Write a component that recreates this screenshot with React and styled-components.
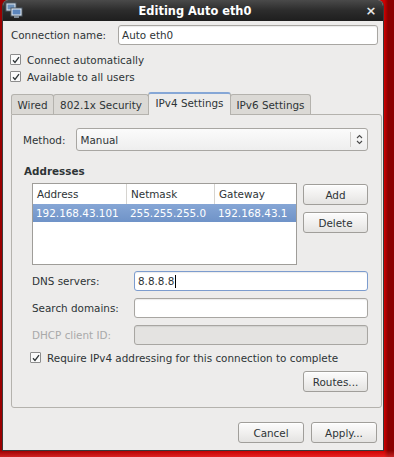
import styled, { createGlobalStyle } from "styled-components";

const GlobalStyle = createGlobalStyle`
  html, body {
    margin: 0;
    padding: 0;
  }
  body {
    width: 394px;
    height: 457px;
    overflow: hidden;
    font-family: "DejaVu Sans", "Liberation Sans", sans-serif;
    font-size: 10.4px;
    color: #2e3436;
    background: #a00000;
  }
`

const Desktop = styled.div`
  width: 394px;
  height: 457px;
  display: flex;
  align-items: flex-start;
  background:
    linear-gradient(180deg, transparent 0%, transparent 98.6%, rgba(255, 70, 70, 0.5) 100%),
    linear-gradient(90deg, #9a0000 0%, #c80000 60%, #d00000 97.5%, #8a0000 98.5%, #8a0000 100%);
`

const Window = styled.div`
  margin-left: 2px;
  width: 382px;
  height: 451px;
  background: #edeceb;
  border: 1px solid #3a3a3a;
  border-top: none;
  border-radius: 6px 6px 0 0;
  box-sizing: border-box;
  display: flex;
  flex-direction: column;
  overflow: hidden;
`

const TitleBar = styled.div`
  height: 21px;
  flex: none;
  display: flex;
  align-items: center;
  padding: 0 6px 0 2px;
  background: linear-gradient(180deg, #4a4a4a 0%, #2c2c2c 50%, #1e1e1e 100%);
  color: #ffffff;
`

const TitleText = styled.div`
  flex: 1;
  text-align: center;
  font-weight: bold;
  font-size: 11.4px;
  padding-left: 2px;
`

const CloseMark = styled.div`
  width: 12px;
  text-align: center;
  font-size: 13px;
  font-weight: bold;
  color: #e6e6e6;
`

const Content = styled.div`
  flex: 1;
  display: flex;
  flex-direction: column;
  padding: 4px 5px 7px 5px;
`

const NameRow = styled.div`
  display: flex;
  align-items: center;
  gap: 12px;
  padding-left: 3px;
`

const Label = styled.span`
  white-space: nowrap;
  color: ${(p) => (p.$disabled ? "#a9a9a9" : "#2e3436")};
  flex: none;
`

const TextField = styled.div`
  flex: 1;
  height: 20px;
  box-sizing: border-box;
  border: 1px solid ${(p) => (p.$focus ? "#7c9cce" : "#a8a6a2")};
  border-radius: 3px;
  background: ${(p) => (p.$disabled ? "#e4e3e1" : "#ffffff")};
  box-shadow: inset 0 1px 1px rgba(0, 0, 0, 0.08);
  display: flex;
  align-items: center;
  padding-left: 3px;
  color: #2e3436;
`

const Caret = styled.span`
  display: inline-block;
  width: 1px;
  height: 13px;
  background: #000;
  margin-left: 1px;
`

const CheckRow = styled.label`
  display: flex;
  align-items: center;
  gap: 6px;
  height: 17px;
  white-space: nowrap;
  padding-left: ${(p) => p.$indent || "2px"};
  margin-top: ${(p) => p.$top || "0px"};
`

const CheckBox = styled.span`
  width: 9px;
  height: 9px;
  border: 1px solid #8c8c8c;
  border-radius: 1px;
  background: #fafafa;
  display: flex;
  align-items: center;
  justify-content: center;
  flex: none;
`

const TabStrip = styled.div`
  display: flex;
  align-items: flex-end;
  margin-top: 7px;
  padding-left: 3px;
  height: 22px;
`

const Tab = styled.div`
  width: ${(p) => p.$width};
  height: ${(p) => (p.$active ? "23px" : "20px")};
  box-sizing: border-box;
  display: flex;
  align-items: center;
  justify-content: center;
  border: 1px solid #b4b2ad;
  border-bottom: none;
  border-radius: 3px 3px 0 0;
  margin-right: -1px;
  background: ${(p) => (p.$active ? "#edeceb" : "#dbd9d5")};
  border-top: ${(p) => (p.$active ? "2px solid #86a7d6" : "1px solid #b4b2ad")};
  position: relative;
  z-index: ${(p) => (p.$active ? 1 : 0)};
  margin-bottom: ${(p) => (p.$active ? "-1px" : "0")};
  padding-bottom: ${(p) => (p.$active ? "3px" : "0")};
`

const Panel = styled.div`
  margin-left: 3px;
  width: 371px;
  height: 294px;
  box-sizing: border-box;
  border: 1px solid #b4b2ad;
  border-radius: 0 3px 3px 3px;
  padding: 13px 13px 0 11px;
  display: flex;
  flex-direction: column;
`

const MethodRow = styled.div`
  display: flex;
  align-items: center;
  gap: 11px;
`

const Combo = styled.div`
  flex: 1;
  height: 23px;
  box-sizing: border-box;
  border: 1px solid #a8a6a2;
  border-radius: 3px;
  background: linear-gradient(180deg, #fbfbfb 0%, #eeeeee 100%);
  display: flex;
  align-items: center;
  padding-left: 3px;
`

const ComboText = styled.span`
  flex: 1;
`

const ComboArrow = styled.span`
  width: 16px;
  height: 15px;
  border-left: 1px solid #d0cecb;
  display: flex;
  align-items: center;
  justify-content: center;
`

const SectionTitle = styled.div`
  font-weight: bold;
  margin-top: 14px;
  margin-left: 1px;
`

const AddressArea = styled.div`
  display: flex;
  gap: 6px;
  margin-top: 6px;
  padding-left: 9px;
`

const Table = styled.div`
  width: 265px;
  height: 82px;
  box-sizing: border-box;
  border: 1px solid #9f9d99;
  background: #ffffff;
  display: flex;
  flex-direction: column;
`

const TableRow = styled.div`
  display: grid;
  grid-template-columns: 94px 88px 1fr;
  height: ${(p) => (p.$header ? "20px" : "18px")};
  align-items: center;
  background: ${(p) => (p.$selected ? "linear-gradient(180deg, #86a6d5 0%, #6f93c8 100%)" : "#ffffff")};
  color: ${(p) => (p.$selected ? "#ffffff" : "#2e3436")};
`

const Cell = styled.div`
  height: 100%;
  display: flex;
  align-items: center;
  padding-left: ${(p) => (p.$header ? "4px" : "3px")};
  border-right: ${(p) => (p.$header && !p.$last ? "1px solid #d6d4d0" : "none")};
  white-space: nowrap;
  overflow: hidden;
`

const ButtonColumn = styled.div`
  display: flex;
  flex-direction: column;
  gap: 7px;
  padding-top: 1px;
`

const Button = styled.div`
  width: ${(p) => p.$width || "65px"};
  height: 21px;
  box-sizing: border-box;
  border: 1px solid #a09e9a;
  border-radius: 3px;
  background: linear-gradient(180deg, #fcfcfc 0%, #f1f0ef 50%, #e4e3e1 100%);
  display: flex;
  align-items: center;
  justify-content: center;
  box-shadow: inset 0 1px 0 #ffffff;
`

const FieldGrid = styled.div`
  display: grid;
  grid-template-columns: 102px 1fr;
  row-gap: 7px;
  align-items: center;
  margin-top: 6px;
  padding-left: 9px;
`

const RoutesRow = styled.div`
  display: flex;
  justify-content: flex-end;
  margin-top: 5px;
`

const DialogButtons = styled.div`
  display: flex;
  justify-content: flex-end;
  gap: 7px;
  margin-top: auto;
  padding-right: 1px;
`

function Check() {
  return (
    <CheckBox>
      <svg width="8" height="8" viewBox="0 0 8 8">
        <path d="M1 4.2 L3 6.4 L7 1.2" fill="none" stroke="#2e3436" strokeWidth="1.3" />
      </svg>
    </CheckBox>
  )
}

function WindowIcon() {
  return (
    <svg width="18" height="17" viewBox="0 0 18 17">
      <rect x="1" y="1" width="10" height="8" fill="#dfe6ee" stroke="#4b5866" />
      <rect x="2.5" y="2.5" width="7" height="5" fill="#6b8fb8" />
      <rect x="6" y="6" width="11" height="8" fill="#e7edf3" stroke="#4b5866" />
      <rect x="7.5" y="7.5" width="8" height="5" fill="#5c86bd" />
      <rect x="9" y="14" width="5" height="2" fill="#7e8a96" />
    </svg>
  )
}

export default function App() {
  return (
    <>
      <GlobalStyle />
      <Desktop>
        <Window>
          <TitleBar>
            <WindowIcon />
            <TitleText>Editing Auto eth0</TitleText>
            <CloseMark>×</CloseMark>
          </TitleBar>

          <Content>
            <NameRow>
              <Label>Connection name:</Label>
              <TextField>Auto eth0</TextField>
            </NameRow>

            <CheckRow $top="6px">
              <Check />
              Connect automatically
            </CheckRow>
            <CheckRow>
              <Check />
              Available to all users
            </CheckRow>

            <TabStrip>
              <Tab $width="43px">Wired</Tab>
              <Tab $width="96px">802.1x Security</Tab>
              <Tab $width="83px" $active>IPv4 Settings</Tab>
              <Tab $width="81px">IPv6 Settings</Tab>
            </TabStrip>

            <Panel>
              <MethodRow>
                <Label>Method:</Label>
                <Combo>
                  <ComboText>Manual</ComboText>
                  <ComboArrow>
                    <svg width="7" height="11" viewBox="0 0 7 11">
                      <path d="M1 4 L3.5 1.5 L6 4 M1 7 L3.5 9.5 L6 7" fill="none" stroke="#4a4a4a" strokeWidth="1.1" />
                    </svg>
                  </ComboArrow>
                </Combo>
              </MethodRow>

              <SectionTitle>Addresses</SectionTitle>

              <AddressArea>
                <Table>
                  <TableRow $header>
                    <Cell $header>Address</Cell>
                    <Cell $header>Netmask</Cell>
                    <Cell $header $last>Gateway</Cell>
                  </TableRow>
                  <TableRow $selected>
                    <Cell>192.168.43.101</Cell>
                    <Cell>255.255.255.0</Cell>
                    <Cell>192.168.43.1</Cell>
                  </TableRow>
                </Table>
                <ButtonColumn>
                  <Button>Add</Button>
                  <Button>Delete</Button>
                </ButtonColumn>
              </AddressArea>

              <FieldGrid>
                <Label>DNS servers:</Label>
                <TextField $focus>
                  8.8.8.8<Caret />
                </TextField>
                <Label>Search domains:</Label>
                <TextField />
                <Label $disabled>DHCP client ID:</Label>
                <TextField $disabled />
              </FieldGrid>

              <CheckRow $indent="7px" $top="4px">
                <Check />
                Require IPv4 addressing for this connection to complete
              </CheckRow>

              <RoutesRow>
                <Button>Routes...</Button>
              </RoutesRow>
            </Panel>

            <DialogButtons>
              <Button $width="66px">Cancel</Button>
              <Button $width="66px">Apply...</Button>
            </DialogButtons>
          </Content>
        </Window>
      </Desktop>
    </>
  )
}
